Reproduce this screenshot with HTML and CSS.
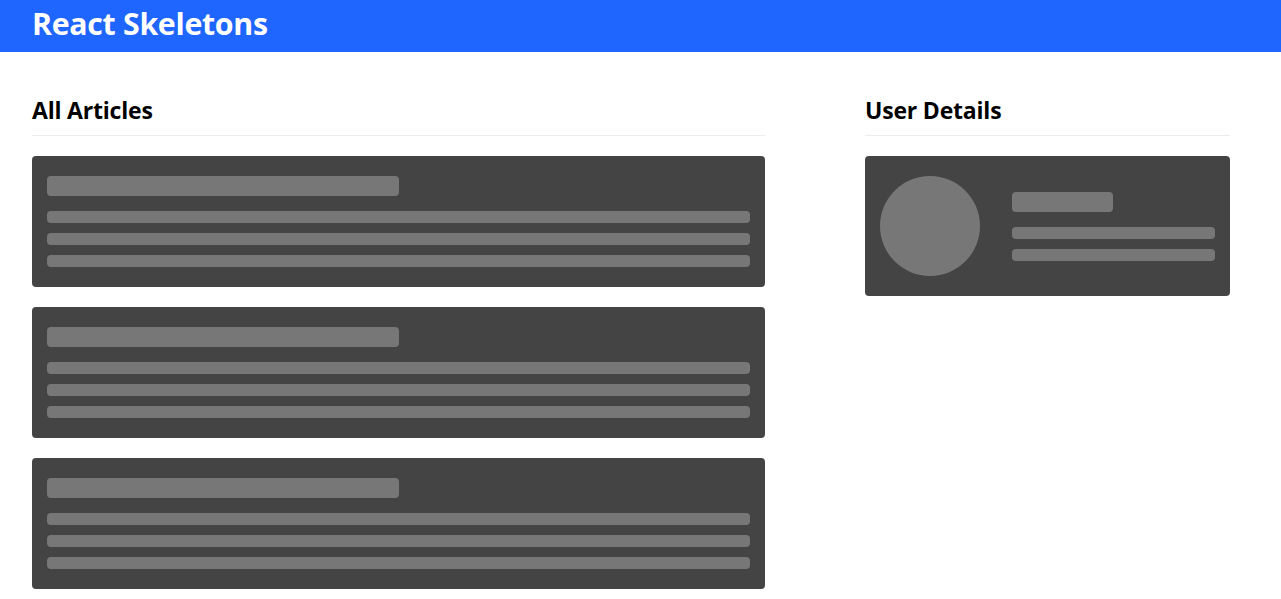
FILE: index.html
```html
<!DOCTYPE html>
<html>
<head>
<meta charset="utf-8">
<link rel="stylesheet" href="styles.css">
</head>
<body>
<header class="header">
  <h1 class="brand">React Skeletons</h1>
</header>
<main class="content">
  <section class="articles">
    <h2 class="section-title">All Articles</h2>
    <div class="card">
      <div class="sk sk-title"></div>
      <div class="sk sk-text"></div>
      <div class="sk sk-text"></div>
      <div class="sk sk-text"></div>
    </div>
    <div class="card">
      <div class="sk sk-title"></div>
      <div class="sk sk-text"></div>
      <div class="sk sk-text"></div>
      <div class="sk sk-text"></div>
    </div>
    <div class="card">
      <div class="sk sk-title"></div>
      <div class="sk sk-text"></div>
      <div class="sk sk-text"></div>
      <div class="sk sk-text"></div>
    </div>
  </section>
  <section class="user">
    <h2 class="section-title">User Details</h2>
    <div class="card profile">
      <div class="profile-avatar"><div class="sk sk-avatar"></div></div>
      <div class="profile-body">
        <div class="sk sk-title"></div>
        <div class="sk sk-text"></div>
        <div class="sk sk-text"></div>
      </div>
    </div>
  </section>
</main>
</body>
</html>
```

FILE: styles.css
```css
* { box-sizing: border-box; }
html, body { margin: 0; padding: 0; background: #fff; }
body { font-family: "Open Sans", "Noto Sans", sans-serif; color: #000; }

.header {
  height: 52px;
  background: #1f65ff;
  display: flex;
  align-items: center;
  padding: 0 32px;
}
.brand {
  margin: 0;
  color: #fff;
  font-size: 30.3px;
  font-weight: 700;
  line-height: 1;
  letter-spacing: -0.3px;
  position: relative;
  top: -2px;
}

.content {
  display: grid;
  grid-template-columns: 733px 365px;
  gap: 100px;
  width: 1262px;
  padding: 0 32px;
  margin-top: 43px;
}

.section-title {
  margin: 0 0 20px 0;
  font-size: 23px;
  font-weight: 700;
  line-height: 30px;
  padding-bottom: 10px;
  border-bottom: 1px solid #ececec;
  letter-spacing: -0.2px;
}

.card {
  background: #444444;
  border-radius: 4px;
  padding: 20px 15px;
  margin-bottom: 20px;
}

.sk { background: #777777; border-radius: 4px; }
.sk-title { width: 50%; height: 20px; margin-bottom: 15px; }
.sk-text { width: 100%; height: 12px; margin-bottom: 10px; }
.sk-text:last-child { margin-bottom: 0; }

.profile {
  display: grid;
  grid-template-columns: 1fr 2fr;
  gap: 30px;
  align-items: center;
}
.sk-avatar { width: 100px; height: 100px; border-radius: 50%; }
```
